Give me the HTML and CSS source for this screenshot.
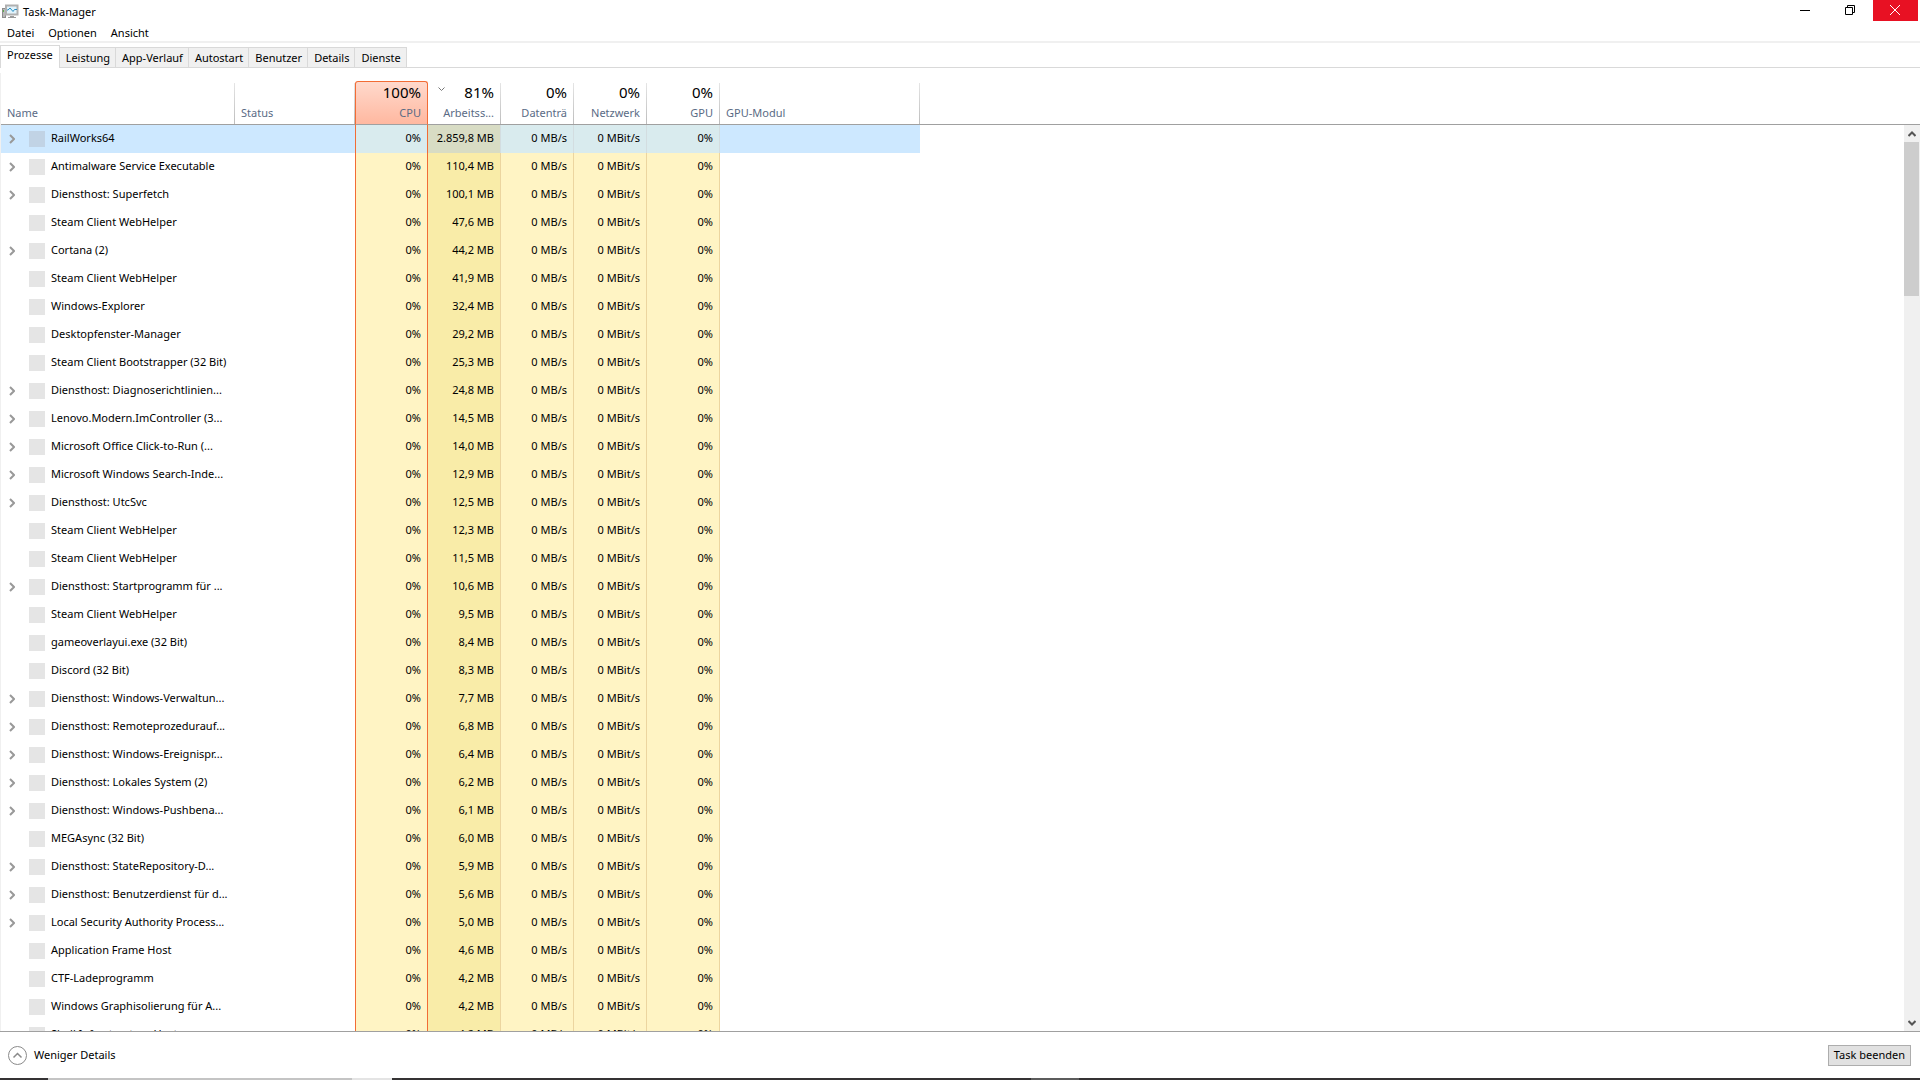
FILE: index.html
```html
<!DOCTYPE html>
<html lang="de">
<head>
    <meta charset="UTF-8">
    <title>Task-Manager</title>
    <link rel="stylesheet" href="styles.css">
</head>
<body>
    <header class="titlebar">
        <svg class="app-icon" width="17" height="16" viewBox="0 0 17 16">
            <rect x="0.5" y="4.5" width="3" height="9" fill="#b9b9b9" stroke="#8c8c8c"/>
            <rect x="1" y="6" width="1" height="2" fill="#5fae4b"/>
            <rect x="4" y="1.5" width="11.500" height="9" fill="#e2f3fb" stroke="#b0b0b0" stroke-width="2"/>
            <path d="M5 6h1l2-2 3 3.500 1.500-2H15" fill="none" stroke="#2a8fc4"/>
            <path d="M8 12h4v1h2v1H6v-1h2z" fill="#9b9b9b"/>
        </svg>
        <h1>Task-Manager</h1>
        <div class="window-buttons">
            <button type="button" aria-label="Minimieren">
                <svg width="11" height="11" viewBox="0 0 11 11"><path d="M0 5.500h10" stroke="#000"/></svg>
            </button>
            <button type="button" aria-label="Verkleinern">
                <svg width="11" height="11" viewBox="0 0 11 11"><path d="M0.500 2.500h7v7h-7zM2.500 2.500v-2h7v7h-2" fill="none" stroke="#000"/></svg>
            </button>
            <button type="button" class="close" aria-label="Schließen">
                <svg width="11" height="11" viewBox="0 0 11 11"><path d="M0 0l10 10M10 0L0 10" stroke="#fff"/></svg>
            </button>
        </div>
    </header>

    <nav class="menu">
        <button type="button">Datei</button>
        <button type="button">Optionen</button>
        <button type="button">Ansicht</button>
    </nav>

    <div class="tabs" role="tablist">
        <button type="button" role="tab" class="active" aria-selected="true">Prozesse</button>
        <button type="button" role="tab">Leistung</button>
        <button type="button" role="tab">App-Verlauf</button>
        <button type="button" role="tab">Autostart</button>
        <button type="button" role="tab">Benutzer</button>
        <button type="button" role="tab">Details</button>
        <button type="button" role="tab">Dienste</button>
    </div>

    <main class="processes">
        <div class="list">
            <table>
                <colgroup>
                    <col class="w-name"><col class="w-status">
                    <col class="w-num"><col class="w-num"><col class="w-num"><col class="w-num"><col class="w-num">
                    <col class="w-module"><col>
                </colgroup>
                <thead>
                    <tr>
                        <th class="text">Name</th>
                        <th class="text">Status</th>
                        <th class="cpu"><div class="total">100%</div>CPU</th>
                        <th class="sorted">
                            <svg class="sort" width="7" height="4" viewBox="0 0 7 4"><path d="M0.500 0.500l3 3 3-3" fill="none" stroke="#777"/></svg>
                            <div class="total">81%</div>Arbeitss...
                        </th>
                        <th><div class="total">0%</div>Datenträ</th>
                        <th><div class="total">0%</div>Netzwerk</th>
                        <th><div class="total">0%</div>GPU</th>
                        <th class="text">GPU-Modul</th>
                        <td class="rest"></td>
                    </tr>
                </thead>
                <tbody id="rows"></tbody>
            </table>
        </div>
        <div class="scroll">
            <div class="scroll-head"></div>
            <div class="track">
                <svg width="8" height="6" viewBox="0 0 8 6"><path d="M0.500 5L4 1.500 7.500 5" fill="none" stroke="#555" stroke-width="2"/></svg>
                <div class="thumb"></div>
                <svg class="down" width="8" height="6" viewBox="0 0 8 6"><path d="M0.500 1L4 4.500 7.500 1" fill="none" stroke="#555" stroke-width="2"/></svg>
            </div>
        </div>
    </main>

    <footer class="footer">
        <button type="button" class="fewer">
            <svg width="19" height="19" viewBox="0 0 19 19">
                <circle cx="9.500" cy="9.500" r="9" fill="none" stroke="#8a8a8a"/>
                <path d="M5.500 11.500l4-4 4 4" fill="none" stroke="#8a8a8a" stroke-width="1.500"/>
            </svg>
            Weniger Details
        </button>
        <button type="button" class="end-task">Task beenden</button>
    </footer>
    <div class="taskbar"><span class="search"></span><span class="search-end"></span><span class="running"></span></div>

    <script>
        // name, memory, expandable
        var processes = [
            ['RailWorks64', '2.859,8', 1],
            ['Antimalware Service Executable', '110,4', 1],
            ['Diensthost: Superfetch', '100,1', 1],
            ['Steam Client WebHelper', '47,6', 0],
            ['Cortana (2)', '44,2', 1],
            ['Steam Client WebHelper', '41,9', 0],
            ['Windows-Explorer', '32,4', 0],
            ['Desktopfenster-Manager', '29,2', 0],
            ['Steam Client Bootstrapper (32 Bit)', '25,3', 0],
            ['Diensthost: Diagnoserichtlinien...', '24,8', 1],
            ['Lenovo.Modern.ImController (3...', '14,5', 1],
            ['Microsoft Office Click-to-Run (...', '14,0', 1],
            ['Microsoft Windows Search-Inde...', '12,9', 1],
            ['Diensthost: UtcSvc', '12,5', 1],
            ['Steam Client WebHelper', '12,3', 0],
            ['Steam Client WebHelper', '11,5', 0],
            ['Diensthost: Startprogramm für ...', '10,6', 1],
            ['Steam Client WebHelper', '9,5', 0],
            ['gameoverlayui.exe (32 Bit)', '8,4', 0],
            ['Discord (32 Bit)', '8,3', 0],
            ['Diensthost: Windows-Verwaltun...', '7,7', 1],
            ['Diensthost: Remoteprozedurauf...', '6,8', 1],
            ['Diensthost: Windows-Ereignispr...', '6,4', 1],
            ['Diensthost: Lokales System (2)', '6,2', 1],
            ['Diensthost: Windows-Pushbena...', '6,1', 1],
            ['MEGAsync (32 Bit)', '6,0', 0],
            ['Diensthost: StateRepository-D...', '5,9', 1],
            ['Diensthost: Benutzerdienst für d...', '5,6', 1],
            ['Local Security Authority Process...', '5,0', 1],
            ['Application Frame Host', '4,6', 0],
            ['CTF-Ladeprogramm', '4,2', 0],
            ['Windows Graphisolierung für A...', '4,2', 0],
            ['Shell Infrastructure Host', '4,2', 0]
        ];

        var arrow = '<svg width="6" height="10" viewBox="0 0 6 10"><path d="M1 1l4 4-4 4" fill="none" stroke="#999" stroke-width="2"/></svg>';

        document.getElementById('rows').innerHTML = processes.map(function(p, i){
            return '<tr' + (i === 0 ? ' class="selected"' : '') + '>' +
                '<td><div class="name"><span class="expand">' + (p[2] ? arrow : '') + '</span>' +
                '<span class="icon"></span><span class="label">' + p[0] + '</span></div></td>' +
                '<td></td>' +
                '<td class="num cpu">0%</td>' +
                '<td class="num sorted">' + p[1] + ' MB</td>' +
                '<td class="num">0 MB/s</td>' +
                '<td class="num">0 MBit/s</td>' +
                '<td class="num">0%</td>' +
                '<td></td><td class="rest"></td></tr>';
        }).join('');
    </script>
</body>
</html>
```

FILE: styles.css
```css
* {box-sizing: border-box;}
body {
    background: #fff;
    color: #000;
    display: flex;
    flex-direction: column;
    font-family: "Noto Sans", "Open Sans", sans-serif;
    font-size: 11px;
    height: 100vh;
    line-height: 16px;
    margin: 0;
    overflow: hidden;
}
button {
    background: none;
    border: 0;
    color: inherit;
    font: inherit;
    padding: 0;
}
svg {
    display: block;
    flex: none;
}

/* title bar and menu */
.titlebar {
    align-items: center;
    display: flex;
    flex: none;
    gap: 4px;
    height: 24px;
    padding-left: 2px;
}
.titlebar h1 {
    font-size: 11px;
    font-weight: normal;
    margin: 0;
}
.window-buttons {
    align-self: flex-start;
    display: flex;
    margin-left: auto;
    padding-right: 2px;
}
.window-buttons button {
    align-items: center;
    display: flex;
    height: 21px;
    justify-content: center;
    width: 45px;
}
.window-buttons .close {
    background: #e81123;
}
.menu {
    border-bottom: 2px solid #f0f0f0;
    display: flex;
    flex: none;
    gap: 14px;
    height: 19px;
    padding-left: 7px;
}

/* tabs */
.tabs {
    align-items: flex-end;
    border-bottom: 1px solid #d9d9d9;
    display: flex;
    flex: none;
    height: 25px;
}
.tabs button {
    background: #f0f0f0;
    border: 1px solid #d9d9d9;
    border-bottom: 0;
    border-left: 0;
    height: 20px;
    padding: 0 5px 0 6px;
}
.tabs .active {
    background: #fff;
    border-left: 1px solid #d9d9d9;
    height: 23px;
    margin-bottom: -1px;
    padding: 0 6px 4px;
}

/* process list */
.processes {
    border-bottom: 1px solid #a0a0a0;
    display: flex;
    flex: 1;
    margin-top: 5px;
    min-height: 0;
}
.list {
    border-left: 1px solid #f0f0f0;
    flex: 1;
    overflow: hidden;
    padding-top: 8px;
}
table {
    border-collapse: separate;
    border-spacing: 0;
    table-layout: fixed;
    width: 100%;
}
.w-name {width: 234px;}
.w-status {width: 120px;}
.w-num {width: 73px;}
.w-module {width: 200px;}
th, td {
    padding: 0 6px;
    white-space: nowrap;
}
th {
    border-bottom: 1px solid #a0a0a0;
    color: #5a6b85;
    font-weight: normal;
    height: 44px;
    padding-bottom: 3px;
    position: relative;
    text-align: right;
    vertical-align: bottom;
}
th::after {
    background: linear-gradient(#e5e5e5, #bdbdbd);
    bottom: 0;
    content: "";
    position: absolute;
    right: 0;
    top: 2px;
    width: 1px;
}
th:not(.text) {
    padding-right: 7px;
}
th.text {
    text-align: left;
}
th.cpu {
    background: linear-gradient(#ffd9cc, #ffb8a0);
    border: 1px solid #f26c35;
    border-bottom-color: #a0a0a0;
    border-radius: 3px 3px 0 0;
    padding-right: 6px;
}
th.cpu::after {
    display: none;
}
.total {
    color: #000;
    font-size: 15px;
    line-height: 18px;
    margin-bottom: 4px;
}
.sort {
    left: 10px;
    position: absolute;
    top: 6px;
}
td {
    height: 28px;
}
thead .rest {
    border-bottom: 1px solid #a0a0a0;
    height: 44px;
}
.name {
    align-items: center;
    display: flex;
}
.expand {
    padding-left: 2px;
    width: 22px;
}
.icon {
    background: #e5e5e5;
    height: 16px;
    margin-right: 6px;
    width: 16px;
}
.label {
    padding-bottom: 2px;
}
.num {
    background: #fff4c4;
    border-right: 1px solid #ecd5a0;
    padding-bottom: 2px;
    padding-right: 6px;
    text-align: right;
}
.num.sorted {
    background: #f9eca8;
}
.num.cpu {
    border-left: 1px solid #f26c35;
    border-right-color: #f26c35;
}
.selected td {
    background: #cde8ff;
}
.selected .num {
    background: #d9ebee;
}
.selected .sorted {
    background: #d8dcc4;
}
.selected .num:not(.cpu) {
    border-right-color: #d3dde0;
}
.selected .icon {
    background: #c1d3e5;
}
.selected .rest {
    background: none;
}

/* scrollbar */
.scroll {
    display: flex;
    flex-direction: column;
    flex: none;
    width: 16px;
}
.scroll-head {
    border-bottom: 1px solid #a0a0a0;
    height: 52px;
}
.track {
    align-items: center;
    background: #f0f0f0;
    display: flex;
    flex: 1;
    flex-direction: column;
    padding: 6px 1px 5px 0;
}
.thumb {
    background: #cdcdcd;
    height: 154px;
    margin-top: 5px;
    width: 100%;
}
.down {
    margin-top: auto;
}

/* footer */
.footer {
    align-items: center;
    display: flex;
    flex: none;
    height: 46px;
    justify-content: space-between;
    padding: 0 9px 0 8px;
}
.fewer {
    align-items: center;
    display: flex;
    gap: 7px;
}
.end-task {
    background: #e1e1e1;
    border: 1px solid #adadad;
    height: 21px;
    padding: 0 5px;
}
.taskbar {
    background: #353334;
    display: flex;
    flex: none;
    height: 2px;
    padding-left: 48px;
}
.search {
    background: #c4c4c4;
    width: 304px;
}
.search-end {
    background: #e4e4e4;
    width: 40px;
}
.running {
    background: #5c5c5c;
    margin-left: 639px;
    width: 48px;
}
```
